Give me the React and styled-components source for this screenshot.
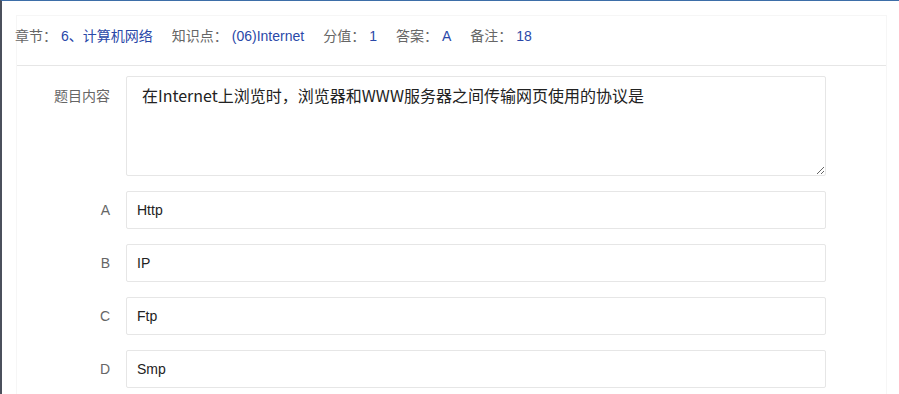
import styled, { createGlobalStyle } from 'styled-components';

const GlobalStyle = createGlobalStyle`
  html, body {
    margin: 0;
    padding: 0;
    background: #fff;
  }
  body {
    font-family: 'Liberation Sans', 'Noto Sans CJK SC', sans-serif;
  }
`;

const Frame = styled.div`
  height: 394px;
  box-sizing: border-box;
  border-left: 2px solid #4b505c;
  border-top: 1px solid #3d6ea8;
  padding: 14px 12px 0 14px;
  overflow: hidden;
`;

const Panel = styled.div`
  border: 1px solid #f6f6f6;
  border-bottom: none;
  min-height: 400px;
`;

const Meta = styled.div`
  display: flex;
  align-items: center;
  height: 50px;
  box-sizing: border-box;
  padding: 10px 0 19px 0;
  border-bottom: 1px solid #e6e6e6;
  font-size: 14px;
  line-height: 20px;

  & > :first-child {
    margin-left: -2px;
  }
`;

const MetaItem = styled.span`
  margin-right: 19px;
  white-space: nowrap;
`;

const MetaLabel = styled.span`
  color: #666;
  margin-right: 4px;
`;

const MetaValue = styled.span`
  color: #2a48a8;
`;

const Form = styled.div`
  padding-top: 10px;
  display: flex;
  flex-direction: column;
  gap: 15px;
`;

const Row = styled.div`
  display: flex;
  align-items: flex-start;
`;

const Label = styled.div`
  width: 109px;
  box-sizing: border-box;
  padding-right: 16px;
  text-align: right;
  line-height: 38px;
  font-size: 14px;
  color: #666;
  font-family: ${p => (p.$cjk ? "'Noto Sans CJK SC', sans-serif" : "'Liberation Sans', sans-serif")};
`;

const Content = styled.textarea`
  width: 700px;
  height: 100px;
  box-sizing: border-box;
  border: 1px solid #e6e6e6;
  border-radius: 2px;
  padding: 7px 15px;
  font-size: 16px;
  line-height: 22px;
  color: #222;
  font-family: 'Noto Sans CJK SC', sans-serif;
  outline: none;
  resize: vertical;
`;

const Option = styled.input`
  width: 700px;
  height: 38px;
  box-sizing: border-box;
  border: 1px solid #e6e6e6;
  border-radius: 2px;
  padding: 0 10px;
  font-size: 14px;
  color: #222;
  font-family: 'Liberation Sans', sans-serif;
  outline: none;
`;

const meta = [
  ['章节：', '6、计算机网络'],
  ['知识点：', '(06)Internet'],
  ['分值：', '1'],
  ['答案：', 'A'],
  ['备注：', '18'],
];

const options = [
  ['A', 'Http'],
  ['B', 'IP'],
  ['C', 'Ftp'],
  ['D', 'Smp'],
];

export default function App() {
  return (
    <>
      <GlobalStyle />
      <Frame>
        <Panel>
          <Meta>
            {meta.map(([k, v]) => (
              <MetaItem key={k}>
                <MetaLabel>{k}</MetaLabel>
                <MetaValue>{v}</MetaValue>
              </MetaItem>
            ))}
          </Meta>
          <Form>
            <Row>
              <Label $cjk>题目内容</Label>
              <Content readOnly defaultValue="在Internet上浏览时，浏览器和WWW服务器之间传输网页使用的协议是" />
            </Row>
            {options.map(([k, v]) => (
              <Row key={k}>
                <Label>{k}</Label>
                <Option readOnly defaultValue={v} />
              </Row>
            ))}
          </Form>
        </Panel>
      </Frame>
    </>
  );
}
